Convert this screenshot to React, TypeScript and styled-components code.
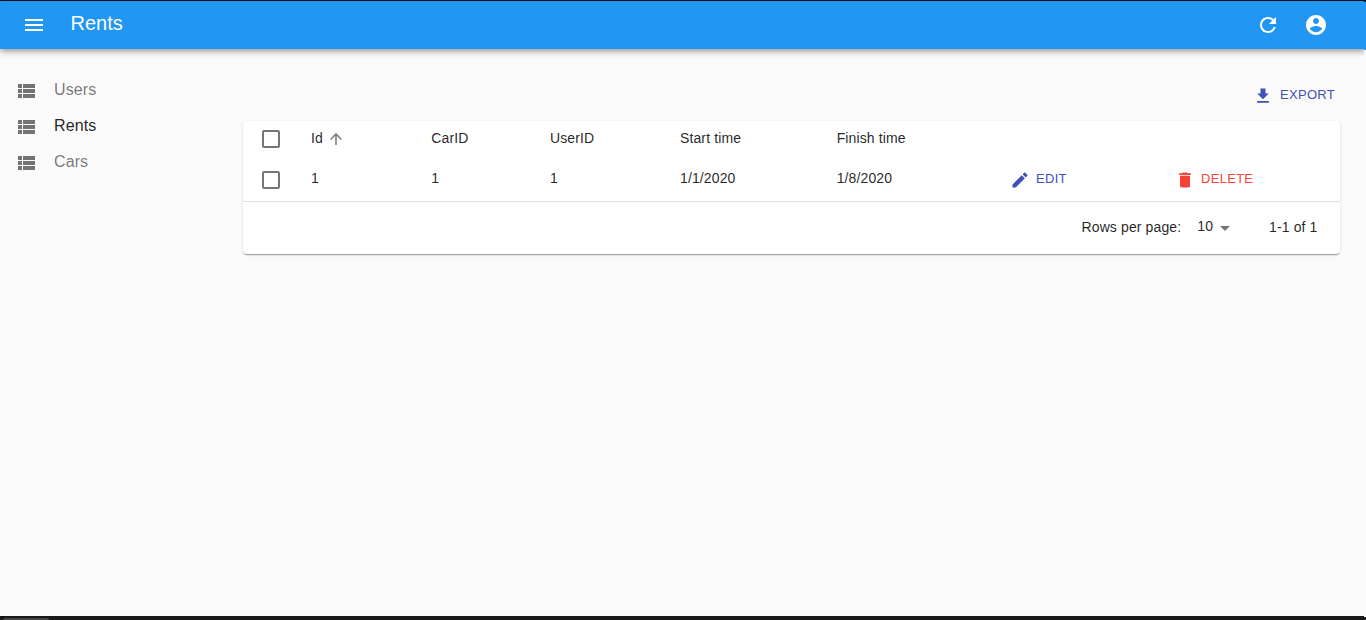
import React from "react";
import styled, { createGlobalStyle } from "styled-components";

const GlobalStyle = createGlobalStyle`
  *, *::before, *::after { box-sizing: border-box; }
  html, body { margin: 0; padding: 0; }
  body {
    background: #fafafa;
    color: rgba(0, 0, 0, 0.87);
    font-family: "Liberation Sans", Arial, sans-serif;
    overflow: hidden;
  }
`;

const icons = {
  menu: "M3 18h18v-2H3v2zm0-5h18v-2H3v2zm0-7v2h18V6H3z",
  refresh:
    "M17.65 6.35C16.2 4.9 14.21 4 12 4c-4.42 0-7.99 3.58-7.99 8s3.57 8 7.99 8c3.73 0 6.84-2.55 7.73-6h-2.08c-.82 2.33-3.04 4-5.65 4-3.31 0-6-2.69-6-6s2.69-6 6-6c1.66 0 3.14.69 4.22 1.78L13 11h7V4l-2.35 2.35z",
  account:
    "M12 2C6.48 2 2 6.48 2 12s4.48 10 10 10 10-4.48 10-10S17.52 2 12 2zm0 3c1.66 0 3 1.34 3 3s-1.34 3-3 3-3-1.34-3-3 1.34-3 3-3zm0 14.2c-2.5 0-4.71-1.28-6-3.22.03-1.99 4-3.08 6-3.08 1.99 0 5.97 1.09 6 3.08-1.29 1.94-3.5 3.22-6 3.22z",
  list: "M4 14h4v-4H4v4zm0 5h4v-4H4v4zM4 9h4V5H4v4zm5 5h12v-4H9v4zm0 5h12v-4H9v4zM9 5v4h12V5H9z",
  download: "M19 9h-4V3H9v6H5l7 7 7-7zM5 18v2h14v-2H5z",
  checkbox:
    "M19 5v14H5V5h14m0-2H5c-1.1 0-2 .9-2 2v14c0 1.1.9 2 2 2h14c1.1 0 2-.9 2-2V5c0-1.1-.9-2-2-2z",
  arrowUp: "M4 12l1.41 1.41L11 7.83V20h2V7.83l5.58 5.59L20 12l-8-8-8 8z",
  edit: "M3 17.25V21h3.75L17.81 9.94l-3.75-3.75L3 17.25zM20.71 7.04c.39-.39.39-1.02 0-1.41l-2.34-2.34c-.39-.39-1.02-.39-1.41 0l-1.83 1.83 3.75 3.75 1.83-1.83z",
  trash: "M6 19c0 1.1.9 2 2 2h8c1.1 0 2-.9 2-2V7H6v12zM19 4h-3.5l-1-1h-5l-1 1H5v2h14V4z",
  dropDown: "M7 10l5 5 5-5z",
};

const Svg = styled.svg<{ $size: number }>`
  display: block;
  flex: none;
  width: ${(p) => p.$size}px;
  height: ${(p) => p.$size}px;
  fill: currentColor;
`;

function Icon({ name, size = 24 }: { name: keyof typeof icons; size?: number }) {
  return (
    <Svg $size={size} viewBox="0 0 24 24" aria-hidden="true">
      <path d={icons[name]} />
    </Svg>
  );
}

const Page = styled.div`
  position: relative;
  display: flex;
  flex-direction: column;
  height: 620px;
  border-top: 1px solid #0c0f14;
`;

const AppBar = styled.header`
  flex: none;
  display: flex;
  align-items: center;
  height: 48px;
  padding: 0 38px 0 22px;
  background: #2196f3;
  color: #fff;
  box-shadow: 0 2px 4px -1px rgba(0, 0, 0, 0.2), 0 4px 5px 0 rgba(0, 0, 0, 0.14),
    0 1px 10px 0 rgba(0, 0, 0, 0.12);
`;

const Title = styled.h1`
  flex: 1;
  margin: 0 0 4px 24.5px;
  font-size: 20px;
  font-weight: 400;
  line-height: 32px;
  letter-spacing: 0;
`;

const BarActions = styled.div`
  display: flex;
  gap: 24px;
`;

const Body = styled.div`
  flex: 1;
  display: flex;
`;

const Sidebar = styled.nav`
  width: 243px;
  padding-top: 24px;
`;

const MenuItem = styled.a<{ $active?: boolean }>`
  display: flex;
  align-items: center;
  gap: 16px;
  height: 36px;
  padding-left: 14px;
  font-size: 16px;
  letter-spacing: 0.1px;
  color: ${(p) => (p.$active ? "rgba(0,0,0,0.87)" : "rgba(0,0,0,0.54)")};

  svg { color: rgba(0, 0, 0, 0.54); }
  span { margin-bottom: 2px; }
`;

const Content = styled.main`
  width: 1097px;
`;

const Toolbar = styled.div`
  display: flex;
  justify-content: flex-end;
  height: 72px;
  padding: 36.5px 5px 0 0;
`;

const Button = styled.button<{ $danger?: boolean; $gap?: number }>`
  display: flex;
  align-items: center;
  gap: ${(p) => p.$gap ?? 7}px;
  height: 20px;
  padding: 0;
  border: 0;
  background: none;
  font: 400 13px/18px "Liberation Sans", Arial, sans-serif;
  letter-spacing: 0.3px;
  text-transform: uppercase;
  color: ${(p) => (p.$danger ? "#f44336" : "#3f51b5")};

  span { margin-bottom: 2px; }
`;

const Card = styled.section`
  height: 133px;
  border-radius: 4px;
  background: #fff;
  font-size: 14px;
  letter-spacing: 0.12px;
  box-shadow: 0 2px 1px -1px rgba(0, 0, 0, 0.2), 0 1px 1px 0 rgba(0, 0, 0, 0.14),
    0 1px 3px 0 rgba(0, 0, 0, 0.12);
`;

const CheckCell = styled.div`
  padding-left: 16px;
  color: rgba(0, 0, 0, 0.54);
`;

const Cell = styled.div`
  display: flex;
  align-items: center;
  gap: 4px;
  line-height: 20px;

  > span { margin-bottom: 2px; }
  > svg { color: rgba(0, 0, 0, 0.54); }
`;

const Row = styled.div<{ $head?: boolean }>`
  display: grid;
  grid-template-columns: 68px 120.3px 118.7px 130px 156.7px 173.3px 165px 1fr;
  align-items: center;
  height: ${(p) => (p.$head ? "36px" : "45px")};
  padding-top: ${(p) => (p.$head ? "0" : "1px")};
  border-bottom: ${(p) => (p.$head ? "0" : "1px solid #e0e0e0")};

  ${Cell} > span { margin-bottom: ${(p) => (p.$head ? "2px" : "3px")}; }
`;

const Pagination = styled.footer`
  display: flex;
  align-items: center;
  justify-content: flex-end;
  height: 52px;
  padding-right: 22.5px;
  line-height: 20px;

  > span { margin-bottom: 2px; }
`;

const PageSize = styled.div`
  display: flex;
  align-items: center;
  margin: 0 32px 0 16px;

  span { margin-bottom: 4px; }
  svg { color: rgba(0, 0, 0, 0.54); }
`;

const TaskBar = styled.div`
  flex: none;
  height: 4px;
  padding: 2px 0 0 3px;
  background: #19191a;
`;

const TaskTab = styled.div`
  width: 46px;
  height: 2px;
  border-radius: 2px 2px 0 0;
  background: #464647;
`;

/* Sliver of the window frame that lies over the right edge. */
const WindowEdge = styled.div`
  position: absolute;
  top: -1px;
  right: 0;
  width: 2px;
  height: 620px;
  border-top: 2px solid #0c0f14;
  border-bottom: 3px solid #19191a;
  background: linear-gradient(#2196f3 48px, #fafafa 48px);
`;

const sections = ["Users", "Rents", "Cars"];
const columns = ["CarID", "UserID", "Start time", "Finish time"];
const record = ["1", "1", "1", "1/1/2020", "1/8/2020"];

export default function App() {
  return (
    <Page>
      <GlobalStyle />
      <AppBar>
        <Icon name="menu" />
        <Title>Rents</Title>
        <BarActions>
          <Icon name="refresh" />
          <Icon name="account" />
        </BarActions>
      </AppBar>
      <Body>
        <Sidebar>
          {sections.map((name) => (
            <MenuItem key={name} $active={name === "Rents"}>
              <Icon name="list" />
              <span>{name}</span>
            </MenuItem>
          ))}
        </Sidebar>
        <Content>
          <Toolbar>
            <Button>
              <Icon name="download" size={20} />
              <span>Export</span>
            </Button>
          </Toolbar>
          <Card>
            <Row $head>
              <CheckCell>
                <Icon name="checkbox" />
              </CheckCell>
              <Cell>
                <span>Id</span>
                <Icon name="arrowUp" size={18} />
              </Cell>
              {columns.map((name) => (
                <Cell key={name}>
                  <span>{name}</span>
                </Cell>
              ))}
            </Row>
            <Row>
              <CheckCell>
                <Icon name="checkbox" />
              </CheckCell>
              {record.map((value, i) => (
                <Cell key={i}>
                  <span>{value}</span>
                </Cell>
              ))}
              <Button $gap={6}>
                <Icon name="edit" size={20} />
                <span>Edit</span>
              </Button>
              <Button $gap={6} $danger>
                <Icon name="trash" size={20} />
                <span>Delete</span>
              </Button>
            </Row>
            <Pagination>
              <span>Rows per page:</span>
              <PageSize>
                <span>10</span>
                <Icon name="dropDown" />
              </PageSize>
              <span>1-1 of 1</span>
            </Pagination>
          </Card>
        </Content>
      </Body>
      <TaskBar>
        <TaskTab />
      </TaskBar>
      <WindowEdge />
    </Page>
  );
}
